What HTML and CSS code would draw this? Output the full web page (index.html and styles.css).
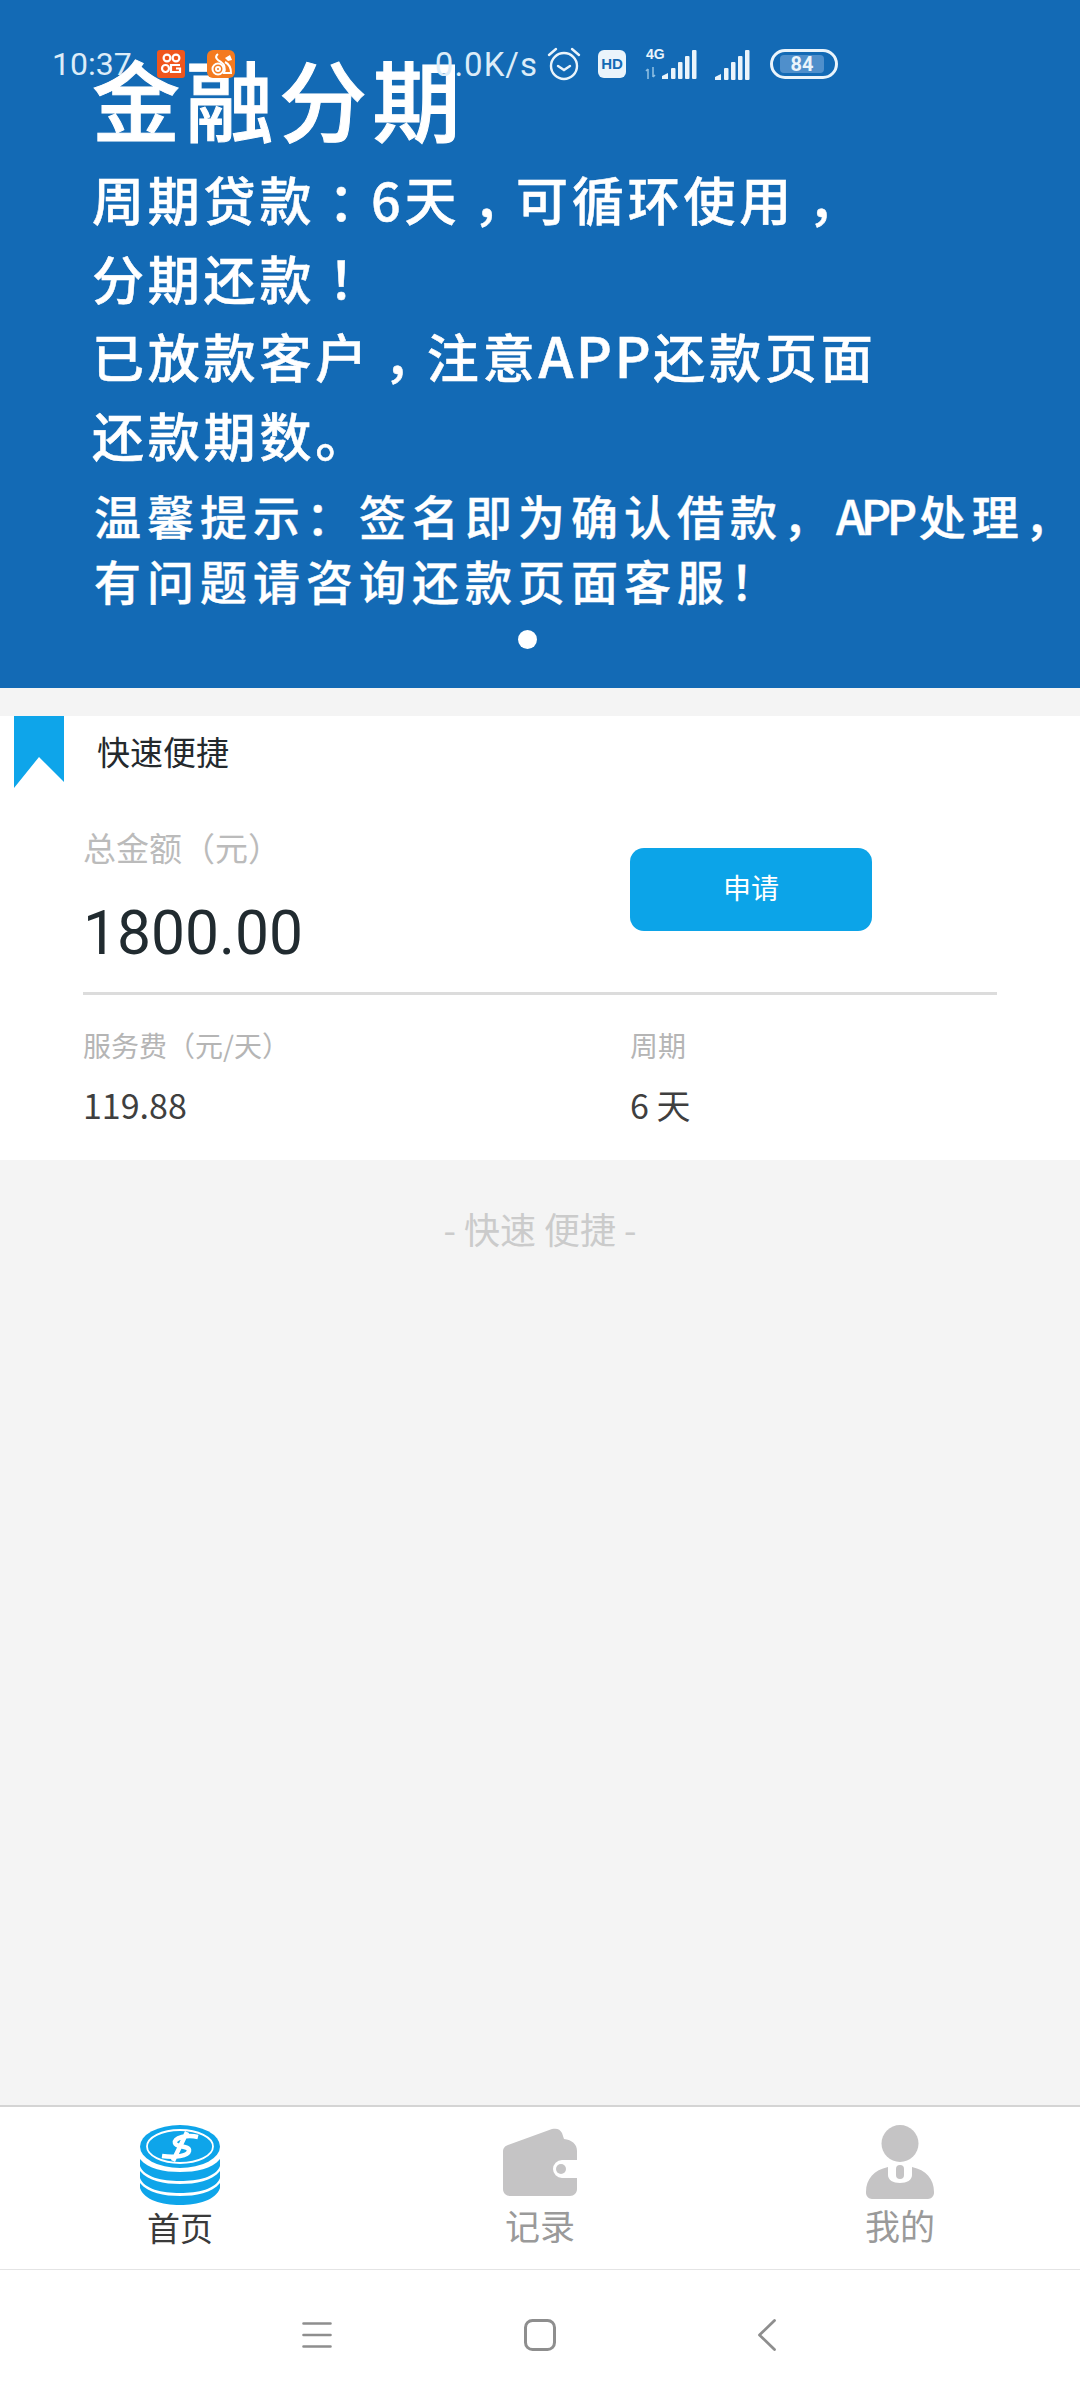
FILE: index.html
```html
<!DOCTYPE html>
<html lang="zh">
<head>
<meta charset="utf-8">
<title>金融分期</title>
<link rel="stylesheet" href="styles.css">
</head>
<body>
<div class="app">
  <header class="banner">
    <div class="status">
      <div class="status-left">
        <span class="time">10:37</span>
        <svg class="app-ico ico-video" viewBox="0 0 28 28"><rect width="28" height="28" rx="3" fill="#f0561d"/><g fill="none" stroke="#fff" stroke-width="2.2"><circle cx="10" cy="8" r="3.4"/><circle cx="19" cy="8" r="3.4"/><rect x="5" y="15" width="7" height="7" rx="3.4"/><path d="M23 15h-9v7h9v-3.500h-4"/></g></svg>
        <svg class="app-ico ico-uc" viewBox="0 0 28 28"><rect width="28" height="28" rx="6" fill="#f47a20"/><g fill="none" stroke="#fff" stroke-width="2"><circle cx="11" cy="19" r="5.500"/><circle cx="11" cy="19" r="2"/><path d="M11 4c-4 3-1 6 3 8 3 2 5 5 3 11h7c0-5-2-9-6-11"/></g><path d="M18 8l5-3 2 5-4 1z" fill="#fff"/></svg>
      </div>
      <div class="status-right">
        <span class="speed">0.0K/s</span>
        <svg class="alarm" viewBox="0 0 36 36"><g fill="none" stroke="#eaf4fb" stroke-width="2.400" stroke-linecap="round"><circle cx="18" cy="20" r="13"/><path d="M12 20l6 4 6-4M3 9l7-6M33 9l-7-6"/></g></svg>
        <span class="hd">HD</span>
        <svg class="signal-4g" viewBox="0 0 60 34"><text class="g4" x="4" y="12">4G</text><path d="M6 22v10M4 24l2-2M11 20v10M11 30l2-2" stroke="#8cbde2" stroke-width="1.600" fill="none"/><g fill="#eaf4fb"><path d="M20 32v-3l6-3v6z"/><rect x="29" y="21" width="4.500" height="11" rx="1"/><rect x="36" y="15" width="4.500" height="17" rx="1"/><rect x="43" y="9" width="4.500" height="23" rx="1"/><rect x="50" y="3" width="4.500" height="29" rx="1"/></g></svg>
        <svg class="signal" viewBox="0 0 42 30"><g fill="#eaf4fb"><path d="M1 30v-3l6-3v6z"/><rect x="10" y="18" width="4.500" height="12" rx="1"/><rect x="17" y="12" width="4.500" height="18" rx="1"/><rect x="24" y="6" width="4.500" height="24" rx="1"/><rect x="31" y="0" width="4.500" height="30" rx="1"/></g></svg>
        <span class="battery"><span class="batt-fill">84</span></span>
      </div>
    </div>
    <div class="banner-copy">
      <h1 class="b-title">金融分期</h1>
      <p class="b-line">周期贷款<span class="p">：</span>6天<span class="p">，</span>可循环使用<span class="p">，</span></p>
      <p class="b-line">分期还款<span class="p">！</span></p>
      <p class="b-line">已放款客户<span class="p">，</span>注意<span class="latin">APP</span>还款页面</p>
      <p class="b-line">还款期数。</p>
      <div class="b-tips">
        <p class="b-tip">温馨提示：签名即为确认借款，<span class="latin-tip">APP</span>处理，</p>
        <p class="b-tip">有问题请咨询还款页面客服！</p>
      </div>
    </div>
    <span class="dot"></span>
  </header>

  <main class="content">
    <section class="card">
      <div class="card-head">
        <svg class="ribbon" viewBox="0 0 50 72"><path d="M0 0h50v66L25 41 0 72z" fill="#0ea5ea"/></svg>
        <span class="card-title">快速便捷</span>
      </div>
      <div class="amount-row">
        <div class="amount-col">
          <div class="muted-lg">总金额（元）</div>
          <div class="amount">1800.00</div>
        </div>
        <button class="apply">申请</button>
      </div>
      <div class="divider"></div>
      <div class="meta-row">
        <div class="meta-col fee">
          <div class="muted-sm">服务费（元/天）</div>
          <div class="meta-val">119.88</div>
        </div>
        <div class="meta-col">
          <div class="muted-sm">周期</div>
          <div class="meta-val">6 天</div>
        </div>
      </div>
    </section>
    <p class="slogan">- 快速 便捷 -</p>
  </main>

  <nav class="tabs">
    <div class="tab active">
      <svg class="tab-ico" viewBox="0 0 80 80"><g fill="#0ea5ea"><path d="M0 34c8 10 24 13 40 13s32-3 40-13v7C76 52 58 56 40 56S4 52 0 41z"/><path d="M0 46c8 10 24 13 40 13s32-3 40-13v7C76 64 58 68 40 68S4 64 0 53z"/><path d="M0 58c8 10 24 13 40 13s32-3 40-13v5C76 75 58 80 40 80S4 75 0 63z"/><ellipse cx="40" cy="21.500" rx="40" ry="21.500"/></g><ellipse cx="40" cy="21.500" rx="33" ry="16.500" fill="none" stroke="#fff" stroke-width="1.800"/><path d="M58 12C47 9 34 13 35 18c1 5 15 2 14 8-1 5-14 7-27 5M47 7L33 36" fill="none" stroke="#fff" stroke-width="4.500"/></svg>
      <span class="tab-label">首页</span>
    </div>
    <div class="tab">
      <svg class="tab-ico" viewBox="0 0 80 80"><path fill="#c5c4c5" d="M3 27c0-4 2-6 5-7L52 4c5-1 8 0 10 4l2 6c8 1 13 5 13 12v9H62a9 9 0 0 0 0 18h15v11c0 4-3 7-7 7H10c-4 0-7-3-7-7z"/><circle cx="61" cy="44" r="5" fill="#c5c4c5"/></svg>
      <span class="tab-label">记录</span>
    </div>
    <div class="tab">
      <svg class="tab-ico" viewBox="0 0 80 80"><g fill="#c5c4c5"><circle cx="40" cy="18.500" r="18.500"/><path d="M28 42v8c0 5 5 8 12 8s12-3 12-8v-8c14 3 22 12 22 25v1c0 3-3 6-6 6H12c-3 0-6-3-6-6v-1c0-13 8-22 22-25z"/><rect x="36" y="40" width="8" height="14" rx="4"/></g></svg>
      <span class="tab-label">我的</span>
    </div>
  </nav>

  <div class="sys-nav">
    <svg class="sys-menu" viewBox="0 0 30 26"><path d="M1.500 1.500h27M1.500 13h27M1.500 24.500h27" stroke="#8e8e8e" stroke-width="2.600" stroke-linecap="round"/></svg>
    <svg class="sys-home" viewBox="0 0 32 32"><rect x="1.500" y="1.500" width="29" height="29" rx="7" fill="none" stroke="#8e8e8e" stroke-width="3"/></svg>
    <svg class="sys-back" viewBox="0 0 18 32"><path d="M16.500 1.500L1.500 16l15 14.500" fill="none" stroke="#8e8e8e" stroke-width="2.800" stroke-linecap="round" stroke-linejoin="round"/></svg>
  </div>
</div>
</body>
</html>
```
FILE: styles.css
```css
* { box-sizing: border-box; margin: 0; padding: 0; }
html, body { background: #f4f4f4; }
body { font-family: Roboto, "Noto Sans CJK SC", "Noto Sans", sans-serif; }
.app { width: 1080px; height: 2400px; display: flex; flex-direction: column; overflow: hidden; }

.banner { position: relative; height: 688px; flex: none; background: #136ab5; color: #fff; }
.status { position: absolute; z-index: 2; left: 52px; top: 46px; width: 786px; height: 36px; display: flex; justify-content: space-between; align-items: center; color: #dcecf8; }
.status-left, .status-right { display: flex; align-items: center; }
.time { font-size: 32px; width: 96px; }
.app-ico { width: 28px; height: 28px; display: block; }
.ico-video { margin: -1px 0 0 9px; }
.ico-uc { margin: -1px 0 0 22px; }
.speed { font-size: 33px; letter-spacing: 1px; }
.alarm { width: 36px; height: 36px; margin-left: 8px; }
.hd { width: 28px; height: 28px; margin-left: 16px; border-radius: 6px; background: #eaf4fb; color: #136ab5; font: 700 15px/28px "Liberation Sans", sans-serif; text-align: center; }
.signal-4g { width: 60px; height: 34px; margin-left: 16px; }
.g4 { font: 700 14px "Liberation Sans", sans-serif; fill: #eaf4fb; }
.signal { width: 42px; height: 30px; margin: 2px 0 0 12px; }
.battery { width: 68px; height: 30px; margin: 0 0 0 14px; border: 3px solid #eaf4fb; border-radius: 15px; padding: 3px 7px; display: flex; }
.batt-fill { width: 44px; background: #4f8fcb; border-radius: 4px; color: #eaf4fb; font: 700 20px/18px Roboto, sans-serif; text-align: center; }

.banner-copy { position: absolute; left: 92px; top: 34px; white-space: nowrap; font-family: "Noto Sans CJK SC", sans-serif; }
.b-title { font-size: 88px; line-height: 126px; font-weight: 500; letter-spacing: 5.500px; -webkit-text-stroke: 1px #fff; }
.b-line { font-size: 52px; line-height: 78.500px; font-weight: 500; letter-spacing: 3.800px; -webkit-text-stroke: 0.5px #fff; }
.p { display: inline-block; transform: translateX(13px); }
.latin { font-size: 56px; line-height: 1; letter-spacing: 2.500px; }
.b-tips { margin: 8px 0 0 2px; }
.b-tip { font-size: 47px; line-height: 65px; font-weight: 500; letter-spacing: 6px; -webkit-text-stroke: 0.4px #fff; }
.latin-tip { letter-spacing: -4.500px; margin-right: 6px; }
.dot { position: absolute; left: 518px; top: 630px; width: 19px; height: 19px; border-radius: 50%; background: #fff; }

.content { flex: 1; padding-top: 28px; }
.card { height: 444px; background: #fff; position: relative; }
.card-head { height: 72px; display: flex; }
.ribbon { width: 50px; height: 72px; margin-left: 14px; flex: none; }
.card-title { margin: 13px 0 0 33px; font-size: 33px; line-height: 44px; color: #24292d; font-family: "Noto Sans CJK SC", sans-serif; }
.amount-row { display: flex; padding: 36px 0 0 83px; }
.amount-col { width: 547px; }
.muted-lg { font-size: 33px; line-height: 46px; color: #bbb; font-family: "Noto Sans CJK SC", sans-serif; }
.amount { font-size: 60.500px; line-height: 72px; margin-top: 28px; color: #212b30; }
.apply { width: 242px; height: 83px; margin-top: 24px; padding-bottom: 6px; background: #0ca4e8; color: #fff; border: 0; border-radius: 14px; font: 28px "Noto Sans CJK SC", sans-serif; }
.divider { height: 3px; margin: 22px 83px 0 83px; background: #dcdcdc; }
.meta-row { display: flex; padding: 30px 0 0 83px; }
.meta-col.fee { width: 547px; }
.muted-sm { font-size: 28px; line-height: 40px; color: #b5b5b5; font-family: "Noto Sans CJK SC", sans-serif; }
.meta-val { margin-top: 20px; font-size: 34px; line-height: 40px; color: #3f3f3f; font-family: "Noto Sans CJK SC", sans-serif; }
.slogan { margin-top: 44px; text-align: center; font-size: 36px; line-height: 48px; color: #cbcbcb; font-family: "Noto Sans CJK SC", sans-serif; }

.tabs { flex: none; height: 165px; display: flex; background: #fff; border-top: 2px solid #d4d4d4; border-bottom: 1px solid #e4e4e4; padding: 18px 0 0; justify-content: space-between; }
.tab { width: 360px; display: flex; flex-direction: column; align-items: center; }
.tab-ico { width: 80px; height: 80px; display: block; }
.tab-label { font-size: 35px; line-height: 46px; margin-top: -3px; color: #9a9a9a; font-family: "Noto Sans CJK SC", sans-serif; }
.tab.active .tab-label { font-size: 33px; margin-top: -1px; color: #3a3a3a; }

.sys-nav { flex: none; height: 130px; background: #fff; display: flex; align-items: center; padding-left: 302px; }
.sys-menu { width: 30px; height: 26px; display: block; }
.sys-home { width: 32px; height: 32px; margin-left: 192px; display: block; }
.sys-back { width: 18px; height: 32px; margin-left: 202px; display: block; }
```
